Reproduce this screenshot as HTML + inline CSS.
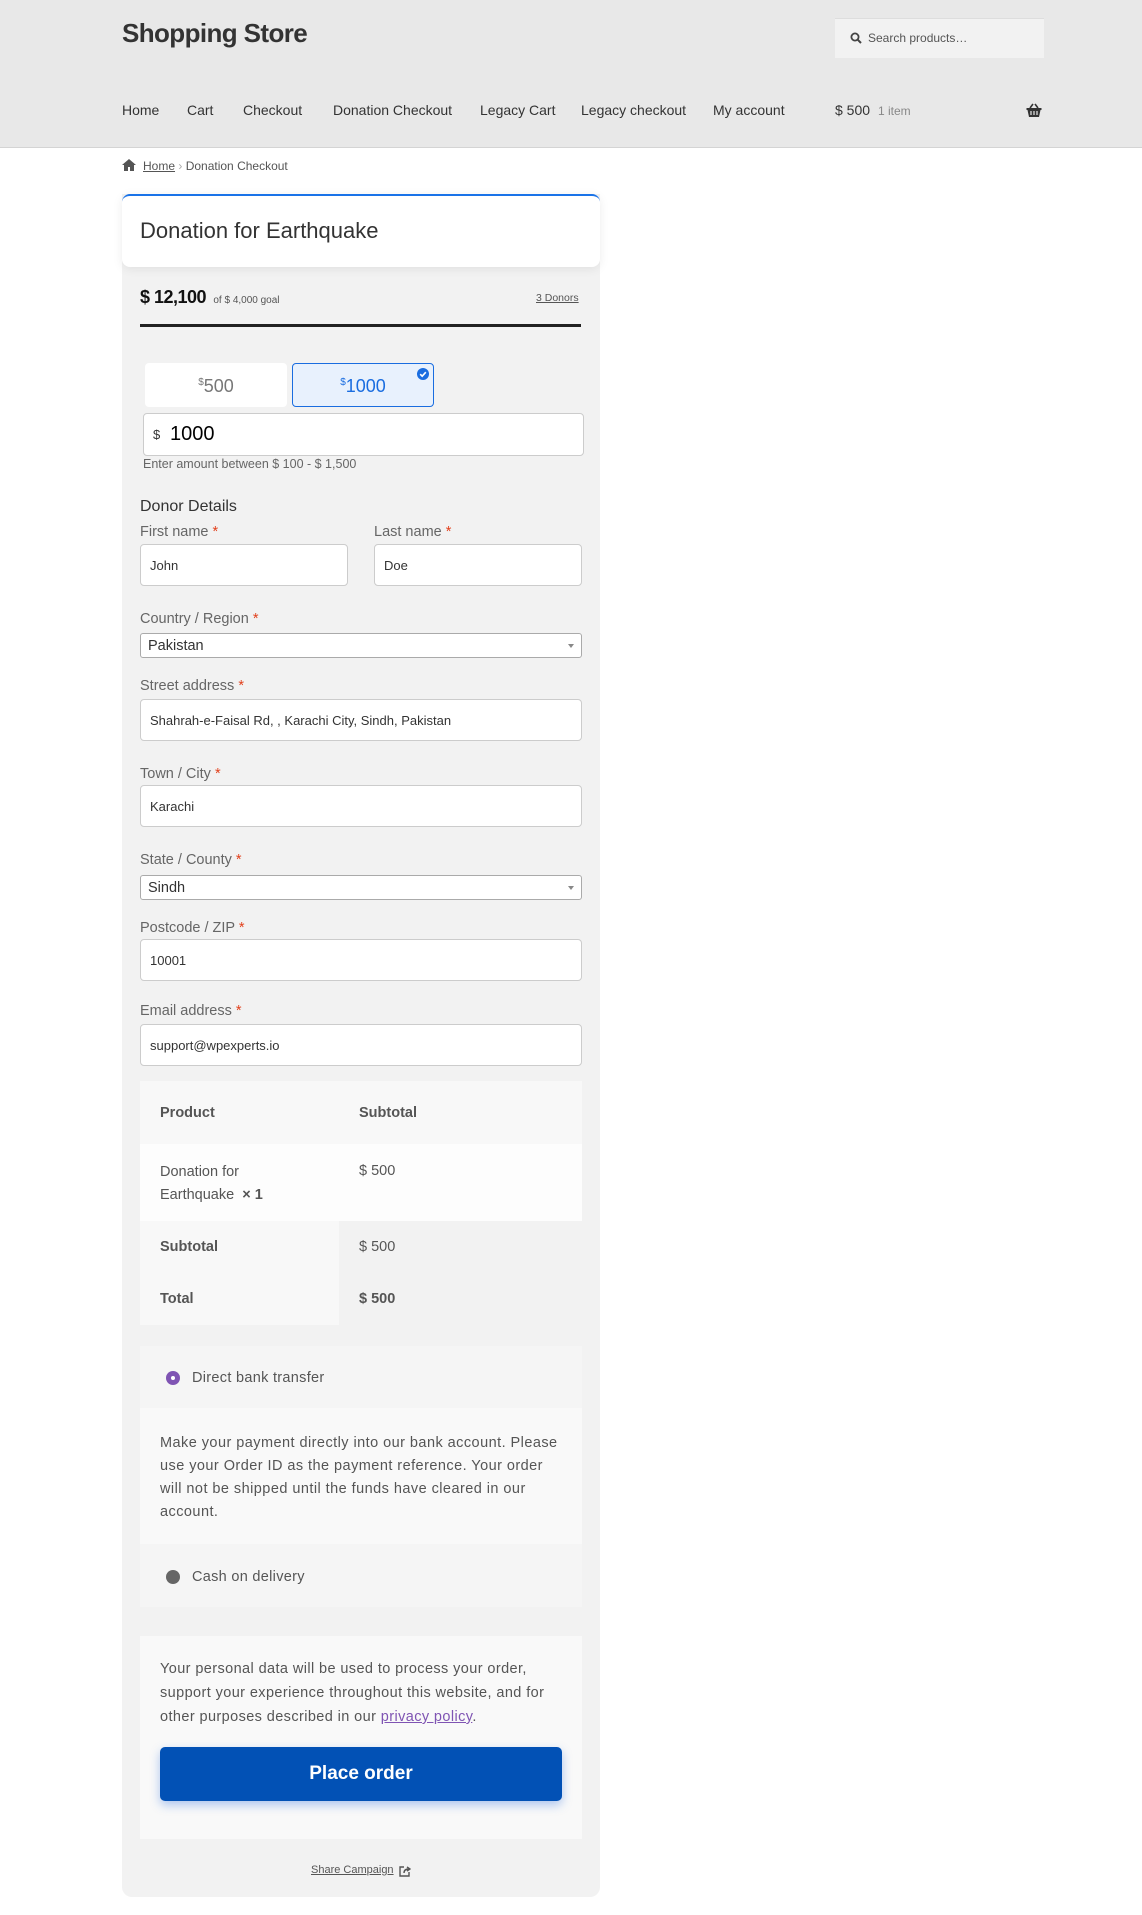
<!DOCTYPE html>
<html><head><meta charset="utf-8"><style>
*{box-sizing:border-box;margin:0;padding:0}
body{width:1142px;height:1915px;background:#fff;font-family:"Liberation Sans",sans-serif;color:#555;position:relative;overflow:hidden}
.a{position:absolute;white-space:nowrap}
.hdr{position:absolute;left:0;top:0;width:1142px;height:148px;background:#e8e8e8;border-bottom:1px solid #d4d4d4}
.nav{top:102px;font-size:14px;color:#333}
.lbl{font-size:14.5px;color:#666}
.lbl b{color:#e2401c;font-weight:normal}
.inp{position:absolute;background:#fff;border:1px solid #ccc;border-radius:4px;font-size:13px;color:#333;padding-left:9px;display:flex;align-items:center}
.sel{position:absolute;background:#fff;border:1px solid #aaa;border-radius:3px;font-size:14.5px;color:#333;padding-left:7px;display:flex;align-items:center}
.sel:after{content:"";position:absolute;right:7px;top:10px;border-left:3px solid transparent;border-right:3px solid transparent;border-top:4px solid #888}
.t{font-size:14.5px;color:#555}
</style></head><body>
<div class="hdr"></div>
<div class="a" style="left:122px;top:18px;font-size:26px;font-weight:bold;color:#333;letter-spacing:-0.6px">Shopping Store</div>
<div class="a" style="left:835px;top:18px;width:209px;height:40px;background:#f2f2f2;border-top:1px solid #ddd"></div>
<svg class="a" style="left:850px;top:32px" width="12" height="12" viewBox="0 0 12 12"><circle cx="5" cy="5" r="3.6" fill="none" stroke="#444" stroke-width="1.8"/><path d="M7.6 7.6L11 11" stroke="#444" stroke-width="2"/></svg>
<div class="a" style="left:868px;top:31px;font-size:12px;color:#555">Search products…</div>
<div class="a nav" style="left:122px">Home</div>
<div class="a nav" style="left:187px">Cart</div>
<div class="a nav" style="left:243px">Checkout</div>
<div class="a nav" style="left:333px">Donation Checkout</div>
<div class="a nav" style="left:480px">Legacy Cart</div>
<div class="a nav" style="left:581px">Legacy checkout</div>
<div class="a nav" style="left:713px">My account</div>
<div class="a nav" style="left:835px">$ 500 <span style="font-size:12px;color:#888;margin-left:4px">1 item</span></div>
<svg class="a" style="left:1026px;top:103px" width="16" height="15" viewBox="0 0 16 15"><path d="M4 5L7 1M12 5L9 1" stroke="#333" stroke-width="1.6" fill="none"/><path d="M0.5 5h15v2h-1l-1.5 7h-10l-1.5-7h-1z" fill="#333"/><path d="M5 8v4M8 8v4M11 8v4" stroke="#e8e8e8" stroke-width="1.2"/></svg>
<svg class="a" style="left:122px;top:159px" width="14" height="12" viewBox="0 0 14 12"><path d="M7 0L0 6h2v6h4V8h2v4h4V6h2z" fill="#555"/></svg>
<div class="a" style="left:143px;top:159px;font-size:12px;color:#555"><u>Home</u> <span style="color:#aaa">›</span> Donation Checkout</div>

<div class="a" style="left:122px;top:194px;width:478px;height:1703px;background:#f2f2f2;border-radius:0 0 10px 10px"></div>
<div class="a" style="left:122px;top:194px;width:478px;height:73px;background:#fff;border-top:2px solid #1a73e8;border-radius:8px;box-shadow:0 2px 10px rgba(0,0,0,.08)"></div>
<div class="a" style="left:140px;top:218px;font-size:22px;color:#333">Donation for Earthquake</div>
<div class="a" style="left:140px;top:287px;font-size:18px;font-weight:bold;color:#111;letter-spacing:-0.5px">$ 12,100 <span style="font-size:10px;font-weight:normal;color:#555;letter-spacing:0">&nbsp;of $ 4,000 goal</span></div>
<div class="a" style="left:536px;top:292px;font-size:10.5px;color:#555;text-decoration:underline">3 Donors</div>
<div class="a" style="left:140px;top:324px;width:441px;height:3px;background:#222"></div>
<div class="a" style="left:145px;top:363px;width:142px;height:44px;background:#fff;border-radius:4px;text-align:center;line-height:40px;font-size:18px;color:#777"><sup style="font-size:10px">$</sup>500</div>
<div class="a" style="left:292px;top:363px;width:142px;height:44px;background:#e8f1fd;border:1.5px solid #1a6de0;border-radius:4px;text-align:center;line-height:38px;font-size:18px;color:#1a6de0"><sup style="font-size:10px">$</sup>1000</div>
<svg class="a" style="left:417px;top:368px" width="12" height="12" viewBox="0 0 12 12"><circle cx="6" cy="6" r="6" fill="#1a6de0"/><path d="M3.2 6.2l2 2 3.6-4" stroke="#fff" stroke-width="1.6" fill="none"/></svg>
<div class="a" style="left:143px;top:413px;width:441px;height:43px;background:#fff;border:1px solid #ccc;border-radius:4px"></div>
<div class="a" style="left:153px;top:427px;font-size:13px;color:#333">$</div>
<div class="a" style="left:170px;top:423px;font-size:20px;color:#000">1000</div>
<div class="a" style="left:143px;top:457px;font-size:12.5px;color:#666">Enter amount between $ 100 - $ 1,500</div>

<div class="a" style="left:140px;top:498px;font-size:16px;color:#333">Donor Details</div>
<div class="a lbl" style="left:140px;top:524px">First name <b>*</b></div>
<div class="a lbl" style="left:374px;top:524px">Last name <b>*</b></div>
<div class="inp" style="left:140px;top:544px;width:208px;height:42px">John</div>
<div class="inp" style="left:374px;top:544px;width:208px;height:42px">Doe</div>
<div class="a lbl" style="left:140px;top:611px">Country / Region <b>*</b></div>
<div class="sel" style="left:140px;top:633px;width:442px;height:25px">Pakistan</div>
<div class="a lbl" style="left:140px;top:678px">Street address <b>*</b></div>
<div class="inp" style="left:140px;top:699px;width:442px;height:42px">Shahrah-e-Faisal Rd, , Karachi City, Sindh, Pakistan</div>
<div class="a lbl" style="left:140px;top:766px">Town / City <b>*</b></div>
<div class="inp" style="left:140px;top:785px;width:442px;height:42px">Karachi</div>
<div class="a lbl" style="left:140px;top:852px">State / County <b>*</b></div>
<div class="sel" style="left:140px;top:875px;width:442px;height:25px">Sindh</div>
<div class="a lbl" style="left:140px;top:920px">Postcode / ZIP <b>*</b></div>
<div class="inp" style="left:140px;top:939px;width:442px;height:42px">10001</div>
<div class="a lbl" style="left:140px;top:1003px">Email address <b>*</b></div>
<div class="inp" style="left:140px;top:1024px;width:442px;height:42px">support@wpexperts.io</div>

<div class="a" style="left:140px;top:1081px;width:442px;height:63px;background:#f8f8f8"></div>
<div class="a" style="left:140px;top:1144px;width:442px;height:77px;background:#fdfdfd"></div>
<div class="a" style="left:140px;top:1221px;width:199px;height:104px;background:#f8f8f8"></div>
<div class="a t" style="left:160px;top:1105px;font-weight:bold">Product</div>
<div class="a t" style="left:359px;top:1105px;font-weight:bold">Subtotal</div>
<div class="a t" style="left:160px;top:1161px;line-height:23px">Donation for<br>Earthquake &nbsp;<b>× 1</b></div>
<div class="a t" style="left:359px;top:1163px">$ 500</div>
<div class="a t" style="left:160px;top:1239px;font-weight:bold">Subtotal</div>
<div class="a t" style="left:359px;top:1239px">$ 500</div>
<div class="a t" style="left:160px;top:1291px;font-weight:bold">Total</div>
<div class="a t" style="left:359px;top:1291px;font-weight:bold">$ 500</div>

<div class="a" style="left:140px;top:1346px;width:442px;height:62px;background:#f5f5f5"></div>
<div class="a" style="left:140px;top:1408px;width:442px;height:136px;background:#f9f9f9"></div>
<div class="a" style="left:140px;top:1544px;width:442px;height:63px;background:#f5f5f5"></div>
<div class="a" style="left:166px;top:1371px;width:14px;height:14px;border-radius:50%;background:#7f54b3"></div>
<div class="a" style="left:171px;top:1376px;width:4px;height:4px;border-radius:50%;background:#fff"></div>
<div class="a t" style="left:192px;top:1370px;letter-spacing:0.3px">Direct bank transfer</div>
<div class="a t" style="left:160px;top:1432px;line-height:23px;white-space:normal;width:405px;letter-spacing:0.45px">Make your payment directly into our bank account. Please use your Order ID as the payment reference. Your order will not be shipped until the funds have cleared in our account.</div>
<div class="a" style="left:166px;top:1570px;width:14px;height:14px;border-radius:50%;background:#666"></div>
<div class="a t" style="left:192px;top:1569px;letter-spacing:0.3px">Cash on delivery</div>

<div class="a" style="left:140px;top:1636px;width:442px;height:203px;background:#f9f9f9"></div>
<div class="a t" style="left:160px;top:1657px;line-height:24px;white-space:normal;width:412px;letter-spacing:0.4px">Your personal data will be used to process your order, support your experience throughout this website, and for other purposes described in our <u style="color:#7f54b3">privacy policy</u>.</div>
<div class="a" style="left:160px;top:1747px;width:402px;height:54px;background:#0251b5;border-radius:5px;box-shadow:0 4px 10px rgba(30,100,220,.35);color:#fff;font-size:19px;font-weight:bold;text-align:center;line-height:54px">Place order</div>
<div class="a" style="left:311px;top:1864px;font-size:11px;color:#555;text-decoration:underline">Share Campaign</div>
<svg class="a" style="left:399px;top:1865px" width="12" height="12" viewBox="0 0 12 12"><path d="M5 2H1v9h9V7" stroke="#555" stroke-width="1.4" fill="none"/><path d="M5 8c0-3 2-4 5-4M8 2l3 2-3 2" stroke="#555" stroke-width="1.4" fill="none"/></svg>
</body></html>
